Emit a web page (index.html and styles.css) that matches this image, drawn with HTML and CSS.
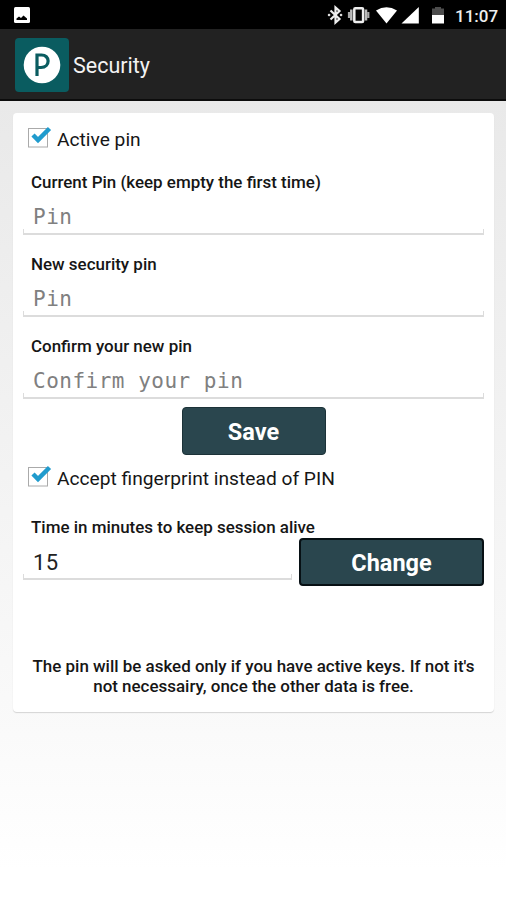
FILE: index.html
```html
<!DOCTYPE html>
<html lang="en">
<head>
<meta charset="utf-8">
<title>Security</title>
<link rel="stylesheet" href="styles.css">
</head>
<body>
<header class="status">
  <svg class="status-photo" width="16" height="16" viewBox="0 0 16 16"><rect width="16" height="16" rx="1.5" fill="#fff"/><path d="M2.500 13v-1.500l2.500-2 2 1.500L9.500 8.500l3.500 3V13z" fill="#000"/></svg>
  <svg class="status-icons" width="140" height="20" viewBox="0 0 140 20">
    <path d="M3.500 5.500l9 8.500-4 3.500V2.500l4 3.500-9 8.500" fill="none" stroke="#eee" stroke-width="2.200"/>
    <path d="M2 10h.1M14 10h.1" stroke="#ddd" stroke-width="2.500" stroke-linecap="round"/>
    <rect x="27.300" y="3.200" width="8.800" height="13.800" rx="1" fill="none" stroke="#eee" stroke-width="2.500"/>
    <path d="M24.300 4.500v11M39 4.500v11" stroke="#bbb" stroke-width="2.500"/><path d="M22 7v6M41.300 7v6" stroke="#aaa" stroke-width="2.200"/>
    <path d="M49 5.400Q59.500-1 70 5.400L59.500 18.500z" fill="#fff"/>
    <path d="M91.800 2v16.500H74.500z" fill="#fff"/>
    <path d="M105 3.500h3v-1.500h6v1.500h3v7h-12z" fill="#4d4d4d"/><path d="M105 10h12v8.500h-12z" fill="#fff"/>
  </svg>
  <span class="clock">11:07</span>
</header>
<div class="bar">
  <svg class="logo" width="54" height="54" viewBox="0 0 54 54"><rect width="54" height="54" rx="4" fill="#0a5c60"/><circle cx="27" cy="27" r="18.300" fill="#fff"/><path d="M22 38V17h4c9.500-.5 9.500 12.500 0 12.500H22" fill="none" stroke="#0a5c60" stroke-width="3.200"/></svg>
  <h1 class="title">Security</h1>
</div>
<main class="card">
  <div class="check">
    <svg width="24" height="24" viewBox="0 0 24 24"><rect x=".500" y="3.500" width="19" height="18.500" fill="#fff" stroke="#aaa"/><path d="M5 10l5 5L21.500 3.500" fill="none" stroke="#209bcd" stroke-width="4.500"/></svg>
    <span>Active pin</span>
  </div>
  <label class="label label-first">Current Pin (keep empty the first time)</label>
  <div class="field">Pin</div>
  <label class="label">New security pin</label>
  <div class="field">Pin</div>
  <label class="label">Confirm your new pin</label>
  <div class="field">Confirm your pin</div>
  <button class="btn save">Save</button>
  <div class="check check-second">
    <svg width="24" height="24" viewBox="0 0 24 24"><rect x=".500" y="3.500" width="19" height="18.500" fill="#fff" stroke="#aaa"/><path d="M5 10l5 5L21.500 3.500" fill="none" stroke="#209bcd" stroke-width="4.500"/></svg>
    <span>Accept fingerprint instead of PIN</span>
  </div>
  <label class="label label-time">Time in minutes to keep session alive</label>
  <div class="row">
    <div class="field value">15</div>
    <button class="btn change">Change</button>
  </div>
  <p class="note">The pin will be asked only if you have active keys. If not it's<br>not necessairy, once the other data is free.</p>
</main>
</body>
</html>
```
FILE: styles.css
```css
* { box-sizing: border-box; }
body {
  margin: 0;
  height: 900px;
  overflow: hidden;
  font-family: Roboto, "Liberation Sans", sans-serif;
  color: #161616;
  background: linear-gradient(#e9e9e9 100px, #f1f1f1 400px, #fafafa 735px, #fff 870px);
}
.status {
  height: 29px;
  background: #000;
  display: flex;
  align-items: flex-start;
  padding: 5px 8px 0 14px;
}
.status-photo { margin-top: 2px; }
.status-icons { margin-left: auto; }
.clock {
  margin-left: -12px;
  width: 43px;
  font-size: 17px;
  font-weight: 500;
  line-height: 22px;
  color: #eee;
  white-space: nowrap;
}
.bar {
  height: 72px;
  background: #222;
  border-bottom: 2px solid #0c0c0c;
  display: flex;
  align-items: center;
  padding: 2px 15px 0;
}
.title {
  margin: 1px 0 0 4px;
  font-size: 21.5px;
  font-weight: 400;
  color: #f3f3f3;
}
.card {
  margin: 12px 12px 0 13px;
  height: 599px;
  padding: 14px 10px 0;
  background: #fff;
  border-radius: 4px;
  box-shadow: 0 1px 1px #d4d4d4;
  display: flex;
  flex-direction: column;
}
.check {
  display: flex;
  height: 24px;
  padding-left: 5px;
  gap: 5px;
  font-size: 19.2px;
  line-height: 25px;
  white-space: nowrap;
}
.check svg { margin-top: -2px; flex: none; }
.label {
  height: 24px;
  margin-top: 17px;
  padding-left: 8px;
  font-size: 16.95px;
  font-weight: 500;
  line-height: 24px;
  white-space: nowrap;
}
.label-first { margin-top: 19px; }
.field {
  position: relative;
  height: 41px;
  padding-left: 10px;
  font: 21px/46px "DejaVu Sans Mono", monospace;
  letter-spacing: .5px;
  color: #808080;
  border-bottom: 2px solid #dcdcdc;
  white-space: nowrap;
}
.field::after {
  content: "";
  position: absolute;
  left: 0;
  right: 0;
  bottom: 0;
  height: 4px;
  border: solid #dcdcdc;
  border-width: 0 1px;
}
.btn {
  height: 48px;
  padding: 3px 0 0;
  border: 1px solid #1c3238;
  border-radius: 4px;
  background: #2a464e;
  color: #fff;
  font: 700 23.5px/1 Roboto, sans-serif;
}
.save { width: 144px; margin: 8px 0 0 159px; padding-right: 1px; }
.check-second { margin-top: 11px; }
.label-time { margin-top: 25px; }
.row { display: flex; justify-content: space-between; }
.value {
  width: 269px;
  font: 22px/48px Roboto, sans-serif;
  letter-spacing: .3px;
  color: #222;
}
.change {
  width: 185px;
  margin-top: -1px;
  border: 2px solid #071014;
}
.note {
  margin: 70px 0 0;
  text-align: center;
  font-size: 16.95px;
  line-height: 20px;
  font-weight: 500;
  white-space: nowrap;
}
```
